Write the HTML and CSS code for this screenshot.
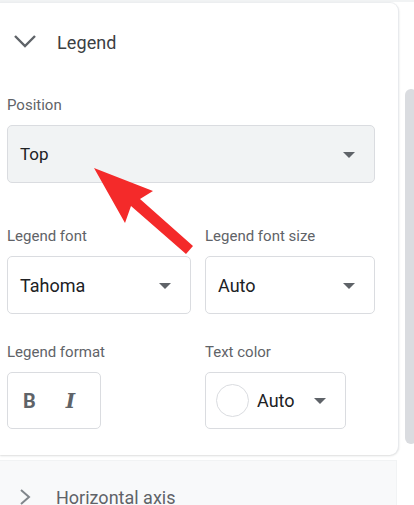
FILE: index.html
```html
<!DOCTYPE html>
<html>
<head>
<meta charset="utf-8">
<link rel="stylesheet" href="styles.css">
</head>
<body>
<div class="frame">
  <div class="main">
    <div class="card">
      <div class="header">
        <svg class="chev-down" width="24" height="14" viewBox="0 0 24 14"><path d="M2 2 L12 12 L22 2" fill="none" stroke="#5f6368" stroke-width="2.4"/></svg>
        <span class="title">Legend</span>
      </div>
      <div class="field">
        <div class="label">Position</div>
        <div class="select grey wide"><span class="val">Top</span><span class="caret"></span></div>
      </div>
      <div class="row">
        <div class="field col-l">
          <div class="label">Legend font</div>
          <div class="select w184"><span class="val big">Tahoma</span><span class="caret"></span></div>
        </div>
        <div class="field col-r">
          <div class="label">Legend font size</div>
          <div class="select w170"><span class="val big">Auto</span><span class="caret"></span></div>
        </div>
      </div>
      <div class="row">
        <div class="field col-l">
          <div class="label">Legend format</div>
          <div class="box fmt"><span class="b">B</span><span class="i">I</span></div>
        </div>
        <div class="field col-r">
          <div class="label">Text color</div>
          <div class="box color"><span class="swatch"></span><span class="val big">Auto</span><span class="caret"></span></div>
        </div>
      </div>
    </div>
    <div class="next">
      <svg class="chev-right" width="14" height="18" viewBox="0 0 14 18"><path d="M3 2 L11 9 L3 16" fill="none" stroke="#80868b" stroke-width="2"/></svg>
      <span class="next-title">Horizontal axis</span>
    </div>
  </div>
  <div class="track"><div class="thumb"></div></div>
</div>
<svg class="arrow" width="414" height="505" viewBox="0 0 414 505"><polygon points="94,168 153,191 140,199 193,246 186,254 131,206 125,223" fill="#f42a2a"/></svg>
</body>
</html>
```
FILE: styles.css
```css
html, body {
  margin: 0;
  padding: 0;
  background: #ffffff;
  font-family: Roboto, "Noto Sans", sans-serif;
  width: 414px;
  height: 505px;
  overflow: hidden;
}
.frame {
  display: flex;
  flex-direction: row;
  height: 505px;
  background: linear-gradient(#f1f3f4 0, #f1f3f4 2px, #ffffff 2px);
}
.main {
  width: 399px;
  display: flex;
  flex-direction: column;
}
.card {
  flex: none;
  margin-top: 2px;
  height: 453px;
  background: #fff;
  border-top: 1px solid #eceef0;
  border-right: 1px solid #e8eaed;
  border-radius: 0 9px 9px 0;
  box-shadow: 0 1px 2px rgba(60,64,67,0.18);
  box-sizing: border-box;
  padding-left: 7px;
  display: flex;
  flex-direction: column;
}
.header {
  height: 80px;
  display: flex;
  align-items: center;
  margin-top: -1px;
}
.chev-down {
  margin-left: 6px;
  margin-top: -2px;
}
.title {
  margin-left: 20px;
  font-size: 18px;
  color: #3c4043;
  letter-spacing: 0.1px;
}
.field {
  display: flex;
  flex-direction: column;
}
.label {
  font-size: 15px;
  color: #5f6368;
  height: 22px;
  line-height: 22px;
  margin-top: 12px;
  margin-bottom: 9px;
}
.row {
  display: flex;
  flex-direction: row;
  margin-top: 30px;
}
.row + .row { margin-top: 15px; }
.col-l { width: 198px; }
.select, .box {
  box-sizing: border-box;
  border: 1px solid #dadce0;
  border-radius: 5px;
  height: 58px;
  display: flex;
  align-items: center;
  background: #fff;
}
.select.grey {
  background: #f1f3f4;
}
.wide { width: 368px; }
.w184 { width: 184px; }
.w170 { width: 170px; }
.select .val {
  padding-left: 12px;
  flex: 1;
  font-size: 17px;
  color: #202124;
}
.val.big { font-size: 18px; }
.caret {
  width: 0;
  height: 0;
  border-left: 6px solid transparent;
  border-right: 6px solid transparent;
  border-top: 6px solid #5f6368;
  margin-right: 19px;
  margin-top: 1px;
}
.box { height: 57px; margin-top: 0; }
.fmt { width: 94px; }
.b {
  font-weight: 700;
  font-size: 20px;
  color: #5f6368;
  margin-left: 15px;
}
.i {
  font-family: "DejaVu Serif", serif;
  font-style: italic;
  font-weight: 700;
  font-size: 20px;
  color: #5f6368;
  margin-left: 30px;
}
.color { width: 141px; }
.swatch {
  width: 31px;
  height: 31px;
  border: 1px solid #dadce0;
  border-radius: 50%;
  margin-left: 10px;
  flex: none;
}
.color .val {
  padding-left: 8px;
  flex: 1;
  color: #202124;
}
.next {
  margin-top: 5px;
  flex: 1;
  background: #f8f9fa;
  border: 1px solid #f1f3f4;
  border-left: none;
  width: 397px;
  box-sizing: border-box;
  display: flex;
  align-items: flex-start;
  padding-top: 27px;
}
.chev-right { margin-left: 18px; margin-top: 0; }
.next-title {
  margin-left: 24px;
  font-size: 18px;
  color: #5f6368;
  line-height: 20px;
  margin-top: 0;
}
.track {
  width: 15px;
  position: relative;
}
.thumb {
  margin-top: 89px;
  margin-left: 6px;
  width: 12px;
  height: 355px;
  background: #dadce0;
  border-radius: 6px;
}
.arrow {
  position: absolute;
  left: 0;
  top: 0;
  pointer-events: none;
}
```
